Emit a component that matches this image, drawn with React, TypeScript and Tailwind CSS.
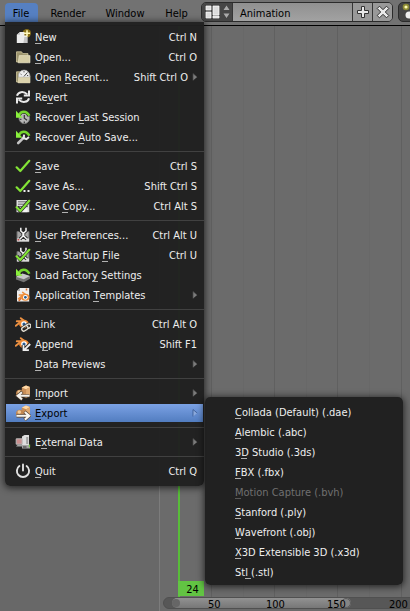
import React from "react";

type Item = { icon?: string; pre?: string; key?: string; post?: string; short?: string; arrow?: boolean; active?: boolean; disabled?: boolean };

const groups: Item[][] = [
  [
    { icon: "new", key: "N", post: "ew", short: "Ctrl N" },
    { icon: "open", key: "O", post: "pen...", short: "Ctrl O" },
    { icon: "recent", pre: "Open ", key: "R", post: "ecent...", short: "Shift Ctrl O", arrow: true },
    { icon: "revert", pre: "Re", key: "v", post: "ert" },
    { icon: "session", pre: "Recover ", key: "L", post: "ast Session" },
    { icon: "auto", pre: "Recover ", key: "A", post: "uto Save..." },
  ],
  [
    { icon: "save", key: "S", post: "ave", short: "Ctrl S" },
    { icon: "saveas", pre: "Save As...", short: "Shift Ctrl S" },
    { icon: "copy", pre: "Save ", key: "C", post: "opy...", short: "Ctrl Alt S" },
  ],
  [
    { icon: "prefs", key: "U", post: "ser Preferences...", short: "Ctrl Alt U" },
    { icon: "startup", pre: "Save Startup ", key: "F", post: "ile", short: "Ctrl U" },
    { icon: "factory", pre: "Load Factor", key: "y", post: " Settings" },
    { icon: "template", pre: "Application ", key: "T", post: "emplates", arrow: true },
  ],
  [
    { icon: "link", pre: "Link", short: "Ctrl Alt O" },
    { icon: "append", pre: "A", key: "p", post: "pend", short: "Shift F1" },
    { key: "D", post: "ata Previews", arrow: true },
  ],
  [
    { icon: "import", key: "I", post: "mport", arrow: true },
    { icon: "export", key: "E", post: "xport", arrow: true, active: true },
  ],
  [{ icon: "external", pre: "E", key: "x", post: "ternal Data", arrow: true }],
  [{ icon: "quit", key: "Q", post: "uit", short: "Ctrl Q" }],
];

const formats: Item[] = [
  { key: "C", post: "ollada (Default) (.dae)" },
  { key: "A", post: "lembic (.abc)" },
  { pre: "3", key: "D", post: " Studio (.3ds)" },
  { key: "F", post: "BX (.fbx)" },
  { key: "M", post: "otion Capture (.bvh)", disabled: true },
  { key: "S", post: "tanford (.ply)" },
  { key: "W", post: "avefront (.obj)" },
  { key: "X", post: "3D Extensible 3D (.x3d)" },
  { pre: "St", key: "l", post: " (.stl)" },
];

function Check() {
  return <path d="M1.6 9.3 5.3 13 14.3 2.8" fill="none" stroke="#83e336" strokeWidth="2.2" strokeLinejoin="round" strokeLinecap="round" />;
}

function Blender() {
  return (
    <g>
      <path d="M.8 9.8 6.5 5.2H1.8M5.8 2.2 12 7" stroke="#ed9142" strokeWidth="1.9" fill="none" strokeLinecap="round" />
      <ellipse cx="9" cy="8" rx="4.9" ry="4.2" fill="#ed8b37" />
      <circle cx="9" cy="8" r="2.8" fill="#fff" />
      <circle cx="9" cy="8" r="1.6" fill="#275b91" />
    </g>
  );
}

function BackArrow() {
  return (
    <g>
      <path d="M3.8 6.2C6 1.6 11.5 1.1 14.4 6.8" fill="none" stroke="#222" strokeWidth="3.8" />
      <path d="M3.8 6.2C6 1.6 11.5 1.1 14.4 6.8" fill="none" stroke="#75d52e" strokeWidth="2.5" />
      <path d="M1 1.8v7h6.6z" fill="#8aef3c" />
    </g>
  );
}

function Folder() {
  return (
    <g>
      <path d="M1.5 13V2.8h5l1.3 1.8H13V13z" fill="#9b936c" stroke="#cfc79e" strokeWidth=".8" />
      <path d="M4.2 6.6H15v7.2H3.2z" fill="#d5cda6" stroke="#eee9cc" strokeWidth=".6" />
    </g>
  );
}

function Boxes() {
  return (
    <g>
      <path d="M6.8 2.4 11 .6l4 1.4v8.8l-4 2.4-4.2-2.4z" fill="#c98e58" />
      <path d="M6.8 2.4 11 .6l4 1.4-3.9 2.2z" fill="#ffd9a8" />
      <path d="M11.1 4.4 15 2.2v8.4l-3.9 2.2z" fill="#e0a970" />
      <circle cx="4.9" cy="8.6" r="3.9" fill="#c08750" />
      <circle cx="4.3" cy="7" r="1.8" fill="#f0c998" />
    </g>
  );
}

function Tools() {
  return (
    <g>
      <path d="M2 4.5h12v10H2z" fill="#a5a5a5" stroke="#6a6a6a" />
      <path d="M2 11.5h12v3H2z" fill="#dcdcdc" />
      <path d="M5.8.8V4L8 6v3l-3 3M11 .8V4L8.7 6v3l3 3" stroke="#282828" strokeWidth="3.2" fill="none" />
      <path d="M5.8.8V4L8 6v3l-3 3M11 .8V4L8.7 6v3l3 3" stroke="#f4f4f4" strokeWidth="1.5" fill="none" />
    </g>
  );
}

function Icon({ name }: { name?: string }) {
  let art: React.ReactNode = null;
  switch (name) {
    case "new":
      art = <><circle cx="11.8" cy="4.2" r="4.2" fill="#a98816" opacity=".75" /><path d="M5 3h4.4v3.6h3V14H1.8V5.8z" fill="#ececec" /><path d="M1.8 5.8H5V3M9.4 8h3v6h-4z" fill="#c4c4c4" /><path d="M12 1.2v6M9 4.2h6" stroke="#fff8ba" strokeWidth="1.6" /></>;
      break;
    case "open": art = <Folder />; break;
    case "recent":
      art = <><Folder /><path d="M3.6 8.2a5.7 5.7 0 1 1 11 0z" fill="#ededed" stroke="#a4a4a4" strokeWidth=".6" /><path d="m9 7.4 3.4-3.9M5.6 5l.9.6M9 2.1v1.3M13.2 6.5h-1.2" stroke="#383838" strokeWidth=".9" /><path d="M3.4 8.4H15V14H2.8z" fill="#dbd2ac" /></>;
      break;
    case "revert":
      art = <g stroke="#e9e9e9" fill="none" strokeWidth="2"><path d="M2 6.8C3 2.6 8.5 1.7 12.3 5.4" /><path d="M14 1.6v5H8.8" /><path d="M14 9.2c-1 4.2-6.5 5.1-10.3 1.4" /><path d="M2 14.4v-5h5.2" /></g>;
      break;
    case "session":
      art = <><circle cx="9.3" cy="9.3" r="5.3" fill="#b6b6b6" stroke="#777" /><path d="M9.3 6v3.3l2.8 2M9.3 12.6v1.4M5.2 10.3h1.2" stroke="#333" strokeWidth="1.2" fill="none" /><BackArrow /></>;
      break;
    case "auto":
      art = <><BackArrow /><path d="m3.2 14 5.8-5.6" stroke="#c4c4c4" strokeWidth="2.6" strokeLinecap="round" /><path d="M9.2 5.6 8.4 9.2l3 1 2.6-2.2" stroke="#e8e8e8" strokeWidth="2" fill="none" /></>;
      break;
    case "save": art = <Check />; break;
    case "saveas":
      art = <><Check /><path d="M8.5 12h2v2h-2zm4 0h2v2h-2z" fill="#eee" /></>;
      break;
    case "copy":
      art = <><path d="M1.5 2h12.8v12.2H1.5z" fill="#ddd" /><path d="M3 3.8h10M3 6.2h10M3 8.6h10" stroke="#666" /><path d="M3.5 10.5h9v3.7h-9z" fill="#f4f4f4" /><path d="m2 9 3.3 4L14 3" stroke="#272727" strokeWidth="3.6" fill="none" /><Check /></>;
      break;
    case "prefs":
      art = <><Tools /><path d="M2.5 12.8h1.8" stroke="#c23535" strokeWidth="1.3" /></>;
      break;
    case "startup":
      art = <><Tools /><path d="m2 9 3.3 4L14 3" stroke="#272727" strokeWidth="3.4" fill="none" /><Check /></>;
      break;
    case "factory":
      art = <><path d="m1 10 6.5-3.2L15 9.2v2.6l-6.2 3.4L1 12.4z" fill="#747474" /><path d="m1 9.7 6.5-3.2L15 9l-6.2 3.2z" fill="#c8c8c8" /><BackArrow /></>;
      break;
    case "template":
      art = <><path d="M5 1h9.2v13.5H2V4z" fill="#eee" /><path d="M2 4h3V1" fill="#b0b0b0" /><g transform="translate(2.8 3.6) scale(.84)"><Blender /></g><path d="m3.8 14 2.5-3M11.5 1.5v2" stroke="#db7436" strokeWidth="1.5" /></>;
      break;
    case "link":
      art = <><Blender /><g transform="rotate(-32 11 11)" fill="none"><path d="M8 9.6h2.5a2 2 0 0 1 0 4H8a2 2 0 0 1 0-4m4.3 0h1.7a2 2 0 0 1 0 4h-1.7" stroke="#2b2b2b" strokeWidth="2.9" /><path d="M8 9.6h2.5a2 2 0 0 1 0 4H8a2 2 0 0 1 0-4m4.3 0h1.7a2 2 0 0 1 0 4h-1.7" stroke="#e9e5d9" strokeWidth="1.3" /></g></>;
      break;
    case "append":
      art = <><Blender /><path d="m15.2 8-5.7 5.6M8.5 9v5.2h5.4" stroke="#262626" strokeWidth="3.6" fill="none" /><path d="m15.2 8-5.7 5.6M8.5 9v5.2h5.4" stroke="#eee" strokeWidth="1.8" fill="none" /></>;
      break;
    case "import":
      art = <><Boxes /><path d="M14.5 10.8H4M7.3 6.8 2.5 10.8l4.8 4" stroke="#54402f" strokeWidth="3.2" fill="none" /><path d="M14.5 10.8H3M7 7.2l-4.3 3.6L7 14.4" stroke="#f5f2ed" strokeWidth="2.1" fill="none" /></>;
      break;
    case "export":
      art = <><Boxes /><path d="M1.5 10.8H13M9.5 6.8l4.7 4-4.7 4" stroke="#54402f" strokeWidth="3.4" fill="none" /><path d="M1.5 10.8h12.3M9.8 7l4.5 3.8-4.5 3.8" stroke="#f9f7f0" strokeWidth="2.1" fill="none" /></>;
      break;
    case "external":
      art = <><path d="M7 2.5 9.5 1H14v11H7z" fill="#dedede" /><path d="M11.2 3h2v7h-2z" fill="#a0a0a0" /><path d="M1.2 4.8h6v5.4h-6z" fill="#c98f8f" stroke="#bbb" /><path d="M3 10.5h4v2H1zM7 11h8v3.4H7z" fill="#a4a4a4" /><path d="M8 13h3.5" stroke="#333" /><path d="M14.5 10.5v2.8" stroke="#74c349" strokeWidth="1.3" /></>;
      break;
    case "quit":
      art = <g fill="none" stroke="#e1e1e1" strokeWidth="1.9" strokeLinecap="round"><path d="M4.4 3a6.1 6.1 0 1 0 7.2 0" /><path d="M8 1.4v6.2" /></g>;
      break;
  }
  return <svg viewBox="0 0 16 16" className="mr-[4px] ml-[10px] h-4 w-4 shrink-0">{art}</svg>;
}

function Label({ item }: { item: Item }) {
  return (
    <span className="whitespace-pre">
      {item.pre}
      {item.key && (
        <span className="relative after:absolute after:bottom-0 after:left-0 after:h-px after:w-[6px] after:bg-current after:opacity-70">{item.key}</span>
      )}
      {item.post}
    </span>
  );
}

function Row({ item }: { item: Item }) {
  return (
    <div className={`flex h-5 items-center ${item.active ? "text-black" : "text-[#eeeeee]"}`}>
      <div className={`mx-px flex h-[18px] w-full items-center ${item.active ? "bg-gradient-to-b from-[#7ba2e5] to-[#527dc0]" : ""}`}>
        <span className="-ml-px flex"><Icon name={item.icon} /></span>
        <Label item={item} />
        <span className={`ml-auto whitespace-pre ${item.arrow ? "mr-[4px]" : "mr-[6px]"}`}>{item.short}</span>
        {item.arrow && (
          <svg viewBox="0 0 6 8" className="mr-[5px] h-2 w-[6px]">
            <path d="M1 .5 5.2 4 1 7.5z" fill={item.active ? "#8ba9dc" : "#7c7c7c"} />
            <path d="M5.2 4 1 .5v7" fill="none" stroke={item.active ? "#2f4f85" : "#484848"} strokeWidth=".7" />
          </svg>
        )}
      </div>
    </div>
  );
}

function Header() {
  return (
    <header className="flex h-[26px] items-start border-b border-black bg-[#727272]">
      <nav className="flex h-[22px] pt-[3px] pl-[5px]">
        <span className="flex h-[20px] w-[33px] items-center justify-center rounded-t bg-[#5680c2] pr-px">File</span>
        <span className="flex h-[20px] w-[60px] items-center justify-center">Render</span>
        <span className="flex h-[20px] w-[54px] items-center justify-center">Window</span>
        <span className="flex h-[20px] w-[49px] items-center justify-center">Help</span>
      </nav>
      <div className="mt-[2px] flex h-[20px] w-[192px] shrink-0 overflow-hidden rounded-[5px] border border-[#2b2b2b]">
        <div className="flex w-[30px] items-center bg-[#464646]">
          <svg viewBox="0 0 30 18" className="h-[18px] w-[30px]">
            <path d="M4 3h5v4H4zm0 6h5v6H4zm7-6h6v9h-6zm0 10h6v2h-6z" fill="#ddd" stroke="#fff" strokeWidth=".7" />
            <path d="m21.5 7 3-4.5 3 4.5zm0 3.5 3 4.5 3-4.5z" fill="#aaa" />
          </svg>
        </div>
        <div className="flex w-[121px] items-center border-l border-[#363636] bg-gradient-to-b from-[#909090] to-[#a2a2a2] pt-[2px] pl-[7px] text-black">Animation</div>
        <div className="flex w-5 items-center justify-center border-l border-[#363636] bg-[#999]">
          <svg viewBox="0 0 14 14" className="h-[14px] w-[14px]"><path d="M5.5 1.5h3v4h4v3h-4v4h-3v-4h-4v-3h4z" fill="#e9e9e9" stroke="#333" /></svg>
        </div>
        <div className="flex w-5 items-center justify-center border-l border-[#363636] bg-[#999]">
          <svg viewBox="0 0 14 14" className="h-[14px] w-[14px]"><path d="m3.5 1.2 3.5 3.5 3.5-3.5 2.3 2.3L9.3 7l3.5 3.5-2.3 2.3L7 9.3l-3.5 3.5-2.3-2.3L4.7 7 1.2 3.5z" fill="#e9e9e9" stroke="#333" /></svg>
        </div>
      </div>
      <div className="mt-[2px] ml-[5px] h-[20px] w-5 shrink-0 rounded-l-[5px] border border-[#2b2b2b] bg-[#464646]">
        <svg viewBox="0 0 12 18" className="h-[18px] w-3"><circle cx="7" cy="4" r="3.3" fill="#8d8b35" /><circle cx="7" cy="4" r="1.6" fill="#fffbb0" /><circle cx="10" cy="12" r="3.5" fill="#eee" /></svg>
      </div>
    </header>
  );
}

function Timeline() {
  return (
    <main className="flex h-[585px]">
      <div className="w-[159px] bg-[#686868]" />
      <div className="w-px bg-[#7c7c7c]" />
      <div className="relative flex min-w-0 flex-1 flex-col bg-[#6b6b6b]">
        <div className="relative h-[571px]">
          <svg viewBox="0 0 250 571" className="h-[571px] w-[250px]" shapeRendering="crispEdges">
            <path d="M51.5 0v571M114.5 0v571M177.5 0v571M241.5 0v571" stroke="#606060" />
            <path d="M83.5 0v571M146.5 0v571M209.5 0v571" stroke="#686868" />
            <path d="M18 0h2v571h-2z" fill="#58bd39" />
          </svg>
          <div className="absolute bottom-[1px] left-[18px] flex h-[15px] w-[26px] items-center justify-center bg-[#62c443] pt-px pl-[3px] text-black">24</div>
        </div>
        <div className="relative mx-[3px] h-3 w-[270px] rounded-full border border-[#505050] bg-[#575757]">
          <div className="ml-[8px] flex h-[10px] w-[179px] items-center justify-between rounded-full bg-gradient-to-b from-[#929292] to-[#777]">
            <span className="h-2 w-2 rounded-full bg-[#666]" />
            <span className="h-[10px] w-[10px] rounded-full border border-[#5b5b5b] bg-[#858585]" />
          </div>
          <span className="absolute top-px left-[44px] leading-3 text-black">50</span>
          <span className="absolute top-px left-[102px] leading-3 text-black">100</span>
          <span className="absolute top-px left-[163px] leading-3 text-black">150</span>
          <span className="absolute top-px left-[225px] leading-3 text-black">200</span>
        </div>
      </div>
    </main>
  );
}

export default function App() {
  return (
    <div className="relative h-[611px] w-[410px] overflow-hidden bg-[#696969] font-['DejaVu_Sans_Condensed','DejaVu_Sans',sans-serif] text-[11px] leading-[13px] text-black">
      <Header />
      <Timeline />
      <div className="absolute top-[22px] left-[5px] w-[199px] rounded-b-[5px] bg-[#202020]/[.97] py-[5px] shadow-[0_1px_7px_1px_rgba(0,0,0,.65)]">
        {groups.map((group, i) => (
          <div key={i}>
            {i > 0 && <div className="flex h-[9px] items-center"><div className="h-px w-full bg-[#414141]" /></div>}
            {group.map((item, j) => <Row key={j} item={item} />)}
          </div>
        ))}
      </div>
      <div className="absolute top-[397px] left-[205px] h-[188px] w-[198px] rounded-[5px] bg-[#202020]/[.98] pt-[5px] shadow-[0_1px_7px_1px_rgba(0,0,0,.65)]">
        {formats.map((item, i) => (
          <div key={i} className={`flex h-5 items-center pl-[30px] ${item.disabled ? "text-[#707070]" : "text-[#eeeeee]"}`}><Label item={item} /></div>
        ))}
      </div>
    </div>
  );
}
